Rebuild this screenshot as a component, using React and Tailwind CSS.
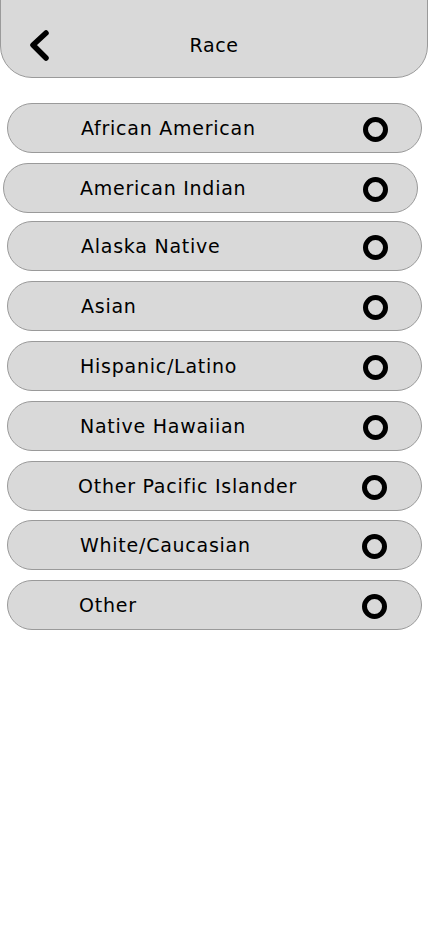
const races = [
  { label: 'African American', mt: 'mt-[25px]', x: 'ml-[7px] pl-[73px] pr-[33px]' },
  { label: 'American Indian', mt: 'mt-[10px]', x: 'ml-[3px] pl-[76px] pr-[29px]' },
  { label: 'Alaska Native', mt: 'mt-[8px]', x: 'ml-[7px] pl-[73px] pr-[33px]' },
  { label: 'Asian', mt: 'mt-[10px]', x: 'ml-[7px] pl-[73px] pr-[33px]' },
  { label: 'Hispanic/Latino', mt: 'mt-[10px]', x: 'ml-[7px] pl-[72px] pr-[33px]' },
  { label: 'Native Hawaiian', mt: 'mt-[10px]', x: 'ml-[7px] pl-[72px] pr-[33px]' },
  { label: 'Other Pacific Islander', mt: 'mt-[10px]', x: 'ml-[7px] pl-[70px] pr-[34px]' },
  { label: 'White/Caucasian', mt: 'mt-[9px]', x: 'ml-[7px] pl-[72px] pr-[34px]' },
  { label: 'Other', mt: 'mt-[10px]', x: 'ml-[7px] pl-[71px] pr-[34px]' },
];

const RaceRow = ({ label, mt, x }) => (
  <div
    className={`${mt} ${x} w-[415px] h-[50px] flex items-center rounded-full border border-[#9a9a9a] bg-[#d9d9d9]`}
  >
    <span className="flex-1 pt-[1px] text-[19px] text-black tracking-[0.75px]">{label}</span>
    <span className="mt-[2px] w-[25px] h-[25px] rounded-full border-[5px] border-black" />
  </div>
);

export default function App() {
  return (
    <div
      className="w-[428px] min-h-[926px] bg-white"
      style={{ fontFamily: '"DejaVu Sans", "Noto Sans", sans-serif' }}
    >
      <div className="h-[79px] -mt-px bg-[#d9d9d9] border border-[#9a9a9a] rounded-b-[32px] flex items-center relative">
        <svg
          className="absolute left-[25px] top-[28px]"
          width="26"
          height="36"
          viewBox="0 0 26 36"
          fill="none"
          stroke="black"
          strokeWidth="5.5"
          strokeLinecap="round"
          strokeLinejoin="round"
        >
          <path d="M20 5 L7 17 L20 30" />
        </svg>
        <span className="w-full text-center pt-[14px] text-[19px] tracking-[0.6px] text-black">Race</span>
      </div>
      {races.map((r) => (
        <RaceRow key={r.label} {...r} />
      ))}
    </div>
  );
}
